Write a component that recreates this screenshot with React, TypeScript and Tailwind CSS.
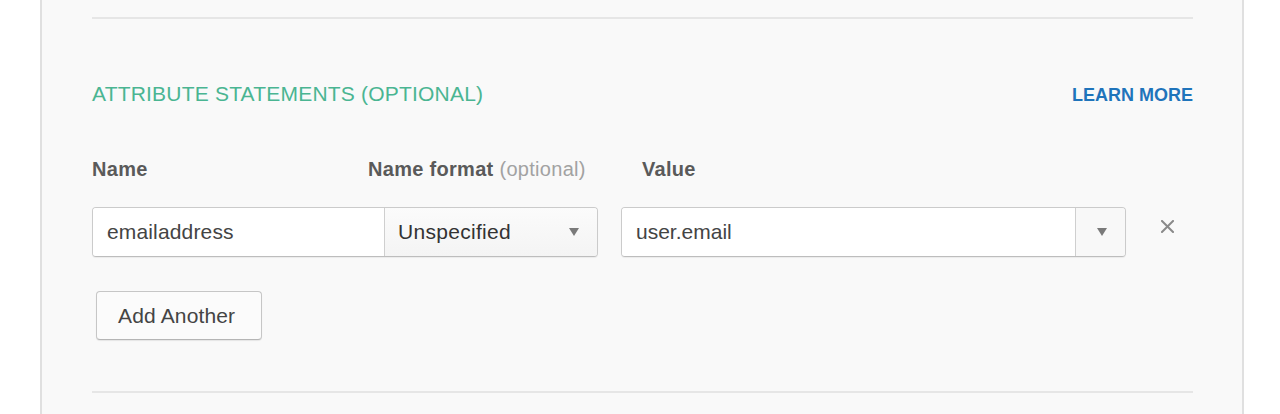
import React from "react";

function Caret() {
  return (
    <svg width="10" height="8" viewBox="0 0 10 8" className="block">
      <path d="M0 0 L10 0 L5 8 Z" fill="#7a7a7a" />
    </svg>
  );
}

export default function App() {
  return (
    <div
      className="min-h-screen bg-white"
      style={{ fontFamily: '"Liberation Sans", Arial, sans-serif' }}
    >
      <div className="ml-[40px] w-[1204px] h-[414px] border-x-2 border-[#e0e0e0] bg-[#f9f9f9] pl-[50px] pr-[49px]">
        <div className="pt-[17px]">
          <div className="h-[2px] bg-[#e6e6e6]" />
        </div>

        <div className="mt-[63px] flex items-baseline justify-between">
          <h2 className="text-[21px] leading-[24px] font-normal tracking-[0.2px] text-[#4ab592]">
            ATTRIBUTE STATEMENTS (OPTIONAL)
          </h2>
          <a className="text-[18px] leading-[24px] font-bold text-[#1f74bb]">
            LEARN MORE
          </a>
        </div>

        <div className="mt-[50px] flex text-[20px] leading-[24px] font-bold tracking-[0.3px] text-[#5a5a5a]">
          <div className="w-[276px]">Name</div>
          <div className="w-[274px]">
            Name format{" "}
            <span className="font-normal text-[#a2a2a2]">(optional)</span>
          </div>
          <div>Value</div>
        </div>

        <div className="mt-[26px] flex items-start">
          <div className="flex h-[50px] w-[506px] rounded-[4px] border border-[#cbcbcb] border-b-[#bdbdbd] shadow-[0_1px_1px_rgba(0,0,0,0.06)] overflow-hidden">
            <div className="flex w-[291px] items-center bg-white pl-[14px] text-[21px] tracking-[0.15px] text-[#444]">
              emailaddress
            </div>
            <div className="flex flex-1 items-center justify-between border-l border-[#cfcfcf] bg-gradient-to-b from-[#fbfbfb] to-[#f4f4f4] pl-[13px] pr-[18px] text-[21px] tracking-[0.3px] text-[#333]">
              <span>Unspecified</span>
              <Caret />
            </div>
          </div>

          <div className="ml-[23px] flex h-[50px] w-[505px] rounded-[4px] border border-[#cbcbcb] border-b-[#bdbdbd] shadow-[0_1px_1px_rgba(0,0,0,0.06)] overflow-hidden">
            <div className="flex flex-1 items-center bg-white pl-[14px] text-[21px] text-[#444]">
              user.email
            </div>
            <div className="flex w-[50px] items-center justify-center border-l border-[#cfcfcf] bg-[#f8f8f8] pl-[2px]">
              <Caret />
            </div>
          </div>

          <svg
            width="13"
            height="13"
            viewBox="0 0 13 13"
            className="ml-[35px] mt-[13px] block"
          >
            <path
              d="M1 1 L12 12 M12 1 L1 12"
              stroke="#8a8a8a"
              strokeWidth="2"
              strokeLinecap="square"
            />
          </svg>
        </div>

        <button className="mt-[34px] ml-[4px] flex h-[49px] w-[166px] items-center rounded-[4px] border border-[#c6c6c6] border-b-[#b5b5b5] bg-[#fbfbfb] pl-[21px] text-[21px] tracking-[0.15px] text-[#444] shadow-[0_1px_1px_rgba(0,0,0,0.08)]">
          Add Another
        </button>

        <div className="mt-[51px] h-[2px] bg-[#e6e6e6]" />
      </div>
    </div>
  );
}
